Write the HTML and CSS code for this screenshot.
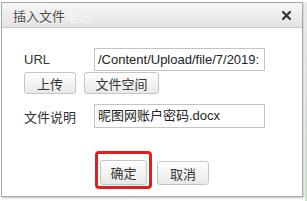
FILE: index.html
```html
<!DOCTYPE html>
<html>
<head>
<meta charset="utf-8">
<link rel="stylesheet" href="styles.css">
</head>
<body>
<div class="page">
  <div class="dialog">
    <div class="titlebar">
      <span class="title">插入文件</span><span class="ghost">笔记</span>
      <svg class="close" width="9" height="9" viewBox="0 0 9 9"><path d="M1 1L8 8M8 1L1 8" stroke="#333" stroke-width="2.2" stroke-linecap="square"/></svg>
    </div>
    <div class="content">
      <div class="row">
        <label class="label">URL</label>
        <div class="input">/Content/Upload/file/7/2019:</div>
      </div>
      <div class="btnrow">
        <span class="btn btn-upload">上传</span>
        <span class="btn btn-space">文件空间</span>
      </div>
      <div class="row row-desc">
        <label class="label">文件说明</label>
        <div class="input">昵图网账户密码.docx</div>
      </div>
    </div>
    <div class="footer">
      <div class="highlight"><span class="btn btn-ok">确定</span></div>
      <span class="btn btn-cancel">取消</span>
    </div>
  </div>
  <div class="side"></div>
</div>
</body>
</html>
```
FILE: styles.css
```css
html, body {
  margin: 0;
  padding: 0;
  background: #ffffff;
}
.page {
  display: flex;
  width: 307px;
  height: 201px;
  padding-top: 2px;
  padding-left: 1px;
  box-sizing: border-box;
  font-family: "Liberation Sans", "Noto Sans CJK SC", sans-serif;
  font-size: 13px;
  color: #333;
}
.dialog {
  width: 302px;
  height: 195px;
  box-sizing: border-box;
  border: 1px solid #a8a8a8;
  box-shadow: 1px 1px 2px rgba(0,0,0,0.25);
  background: #fff;
  display: flex;
  flex-direction: column;
}
.side {
  flex: 1;
  margin-left: 2px;
  background: linear-gradient(#e8e8e8, #d8dcd8 60%, #cfe0cf);
}
.titlebar {
  height: 24px;
  display: flex;
  align-items: center;
  padding-left: 11px;
  padding-right: 11px;
  background: linear-gradient(#f6f6f6, #e3e3e3);
  border-bottom: 1px solid #c8c8c8;
  font-family: "Noto Sans CJK SC", sans-serif;
  font-size: 13px;
}
.title {
  color: #4a4a4a;
  text-shadow: 0 1px 0 #fff;
}
.ghost {
  color: #f6f6f6;
}
.close {
  margin-left: auto;
}
.content {
  padding: 20px 0 0 22px;
}
.row {
  display: flex;
  align-items: center;
}
.label {
  width: 70px;
  font-family: "Noto Sans CJK SC", sans-serif;
  font-size: 13px;
  color: #333;
}
.row .label:first-child {
  font-family: "Liberation Sans", "Noto Sans CJK SC", sans-serif;
}
.row-desc .label:first-child {
  font-family: "Noto Sans CJK SC", sans-serif;
}
.input {
  width: 171px;
  height: 23px;
  box-sizing: border-box;
  border: 1px solid #c4c4c4;
  padding: 0 3px;
  line-height: 21px;
  font-size: 13px;
  color: #222;
  white-space: nowrap;
  overflow: hidden;
  font-family: "Liberation Sans", "Noto Sans CJK SC", sans-serif;
}
.btnrow {
  display: flex;
  gap: 8px;
  margin-top: 1px;
}
.btn {
  display: inline-flex;
  align-items: center;
  justify-content: center;
  height: 22px;
  box-sizing: border-box;
  border: 1px solid #c6c6c6;
  border-radius: 3px;
  background: linear-gradient(#ffffff, #e8e8e8);
  font-family: "Noto Sans CJK SC", sans-serif;
  font-size: 13px;
  color: #333;
}
.btn-upload { width: 52px; }
.btn-space { width: 75px; }
.row-desc {
  margin-top: 10px;
}
.row-desc .input {
  height: 24px;
  line-height: 22px;
}
.footer {
  display: flex;
  align-items: flex-end;
  padding-left: 93px;
  margin-top: 23px;
}
.highlight {
  border: 3px solid #e0201e;
  border-radius: 4px;
  padding: 6px 2px 1px 2px;
}
.btn-ok {
  width: 47px;
  height: 25px;
}
.btn-cancel {
  width: 52px;
  height: 24px;
  margin-left: 5px;
  margin-bottom: 4px;
}
```
